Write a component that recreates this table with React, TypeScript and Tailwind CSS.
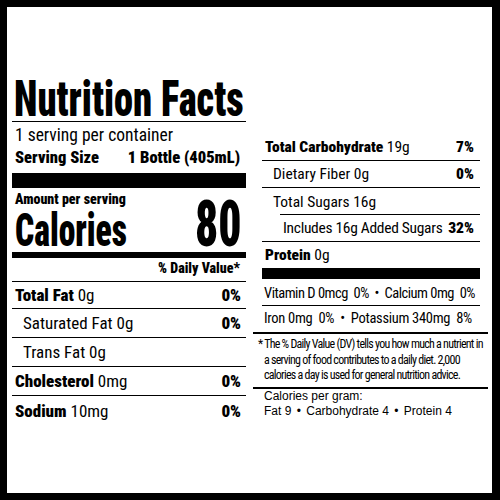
const cond = "font-['Roboto_Condensed','Roboto',sans-serif]";

function LeftRow({
  label,
  amount,
  dv,
  indent,
  last,
  first,
}: {
  label: string;
  amount: string;
  dv?: string;
  indent?: boolean;
  last?: boolean;
  first?: boolean;
}) {
  return (
    <div
      className={`flex justify-between items-end text-[17px] leading-[20px] pr-[5px] ${
        first ? "h-[27px] pb-[3px]" : "h-[29px] pb-[4px]"
      } ${last ? "" : "border-b border-black"} ${indent ? "pl-[11px]" : "pl-[3px]"}`}
    >
      <span>
        {indent ? (
          <span>{label}</span>
        ) : (
          <span className="font-black">{label}</span>
        )}{" "}
        {amount}
      </span>
      {dv && <span className="font-black">{dv}</span>}
    </div>
  );
}

export default function App() {
  return (
    <div
      className={`w-[500px] h-[500px] bg-white text-black border-black border-t-[7px] border-l-[7px] border-r-[8px] border-b-[7px] flex pl-[5px] pr-[12px] ${cond}`}
    >
      {/* left column */}
      <div className="w-[234px] flex flex-col pt-[70px]">
        <div className="h-[45px] border-b border-black pl-[2px] whitespace-nowrap">
          <span className="inline-block text-[50px] leading-[44px] font-black scale-x-[0.77] origin-left">
            Nutrition Facts
          </span>
        </div>
        <div className="mt-[3px] text-[17.5px] leading-[20px] pl-[3px]">1 serving per container</div>
        <div className="mt-[3px] flex justify-between text-[16.5px] leading-[20px] font-black pl-[3px] pr-[6px]">
          <span>Serving Size</span>
          <span>1 Bottle (405mL)</span>
        </div>
        <div className="mt-[5px] h-[15px] bg-black" />
        <div className="mt-[3px] text-[14px] leading-[16px] font-black pl-[3px]">Amount per serving</div>
        <div className="-mt-[6px] h-[46px] flex justify-between items-baseline pl-[3px] pr-[5px] font-black whitespace-nowrap">
          <span className="inline-block text-[46px] leading-[46px] scale-x-[0.73] origin-left">Calories</span>
          <span className="inline-block text-[65px] leading-[46px] scale-x-[0.7] origin-right">80</span>
        </div>
        <div className="mt-[5px] h-[6px] bg-black" />
        <div className="h-[24px] border-b border-black flex justify-end items-end pb-[5px] pr-[6px] text-[14px] leading-[16px] font-black">
          % Daily Value*
        </div>
        <LeftRow first label="Total Fat" amount="0g" dv="0%" />
        <LeftRow indent label="Saturated Fat" amount="0g" dv="0%" />
        <LeftRow indent label="Trans Fat" amount="0g" />
        <LeftRow label="Cholesterol" amount="0mg" dv="0%" />
        <LeftRow last label="Sodium" amount="10mg" dv="0%" />
      </div>

      {/* right column */}
      <div className="w-[218px] ml-[16px] flex flex-col pt-[127px] text-[15.5px] leading-[18px]">
        <div className="h-[27px] border-b border-black flex justify-between items-end pb-[4px] pl-[3px] pr-[6px] whitespace-nowrap">
          <span>
            <span className="font-black">Total Carbohydrate</span> 19g
          </span>
          <span className="font-black">7%</span>
        </div>
        <div className="h-[27px] border-b border-black flex justify-between items-end pb-[4px] pl-[11px] pr-[6px]">
          <span>Dietary Fiber 0g</span>
          <span className="font-black">0%</span>
        </div>
        <div className="h-[26px] flex items-end pb-[3px] pl-[11px] whitespace-nowrap">Total Sugars 16g</div>
        <div className="ml-[18px] h-px bg-black" />
        <div className="h-[27px] border-b border-black flex justify-between items-end pb-[4px] pl-[21px] pr-[6px] whitespace-nowrap">
          <span className="tracking-[-0.3px]">Includes 16g Added Sugars</span>
          <span className="font-black">32%</span>
        </div>
        <div className="h-[26px] flex items-end pb-[4px] pl-[3px]">
          <span>
            <span className="font-black">Protein</span> 0g
          </span>
        </div>
        <div className="h-[11px] bg-black" />
        <div className="h-[27px] border-b border-black flex items-end pb-[2px] pl-[2px] text-[14.5px] tracking-[-0.5px] whitespace-nowrap">
          Vitamin D 0mcg&nbsp; 0% &nbsp;•&nbsp; Calcium 0mg&nbsp; 0%
        </div>
        <div className="h-[26px] flex items-end pb-[4px] pl-[2px] text-[14.5px] tracking-[-0.3px] whitespace-nowrap">
          Iron 0mg&nbsp; 0% &nbsp;•&nbsp; Potassium 340mg&nbsp; 8%
        </div>
        <div className="-ml-[9px] -mr-[8px] h-[2px] bg-black" />
        <div className="pt-[3px] text-[12px] leading-[15.5px] tracking-[-0.75px] whitespace-nowrap">
          <div className="-ml-[4px]">* The % Daily Value (DV) tells you how much a nutrient in</div>
          <div className="pl-[2px]">a serving of food contributes to a daily diet. 2,000</div>
          <div className="pl-[2px]">calories a day is used for general nutrition advice.</div>
        </div>
        <div className="mt-[3px] -ml-[9px] -mr-[8px] h-[2px] bg-black" />
        <div className="font-['Liberation_Sans',Arial,sans-serif] text-[12px] leading-[15px] pl-[2px] whitespace-nowrap">
          <div>Calories per gram:</div>
          <div>
            Fat 9 <span className="mx-[2px]">•</span> Carbohydrate 4 <span className="mx-[2px]">•</span> Protein 4
          </div>
        </div>
      </div>
    </div>
  );
}
